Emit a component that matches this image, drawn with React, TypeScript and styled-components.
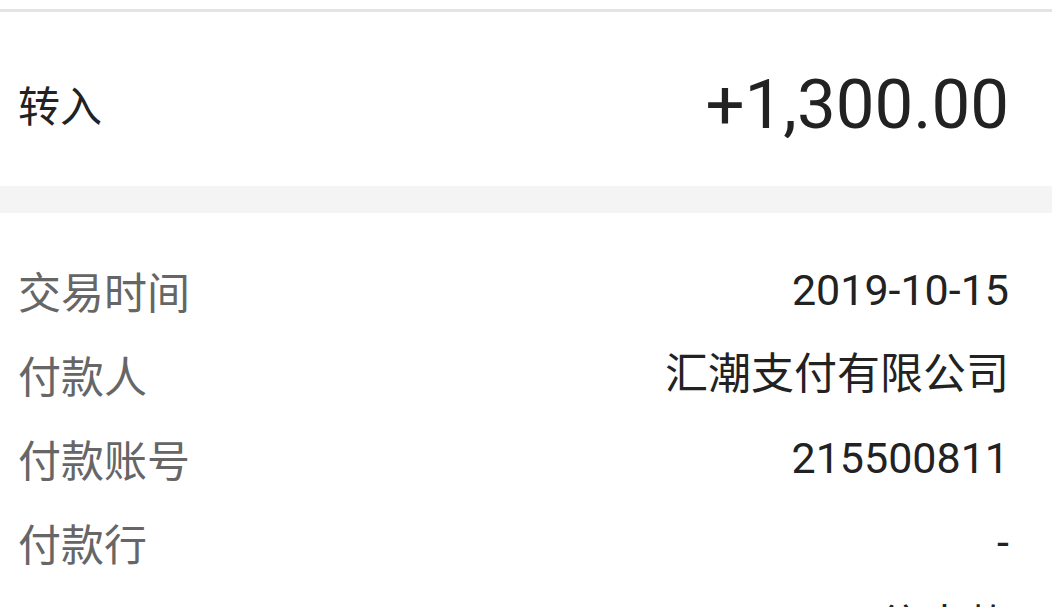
import styled, { createGlobalStyle } from "styled-components";

const GlobalStyle = createGlobalStyle`
  html, body {
    margin: 0;
    padding: 0;
    background: #fff;
    overflow: hidden;
  }
  body {
    font-family: "Roboto", "Noto Sans CJK SC", sans-serif;
  }
`;

const Page = styled.div`
  width: 1052px;
  height: 607px;
  overflow: hidden;
  padding-top: 9px;
  box-sizing: border-box;
`;

const TopLine = styled.div`
  height: 3px;
  background: #e4e4e4;
`;

const Summary = styled.div`
  height: 174px;
  box-sizing: border-box;
  padding: 10px 43px 0 18px;
  display: flex;
  align-items: center;
  justify-content: space-between;
`;

const Kind = styled.div`
  font-family: "Noto Sans CJK SC", sans-serif;
  font-size: 42px;
  color: #222;
  line-height: 1;
`;

const Amount = styled.div`
  font-family: "Roboto", sans-serif;
  font-size: 69px;
  color: #222;
  line-height: 1;
`;

const Gap = styled.div`
  height: 27px;
  background: #f4f4f4;
`;

const Details = styled.div`
  padding: 35px 43px 0 18px;
  display: flex;
  flex-direction: column;
`;

const Row = styled.div`
  height: 84px;
  display: flex;
  align-items: center;
  justify-content: space-between;
  font-size: 43px;
  line-height: 1;
`;

const Label = styled.span`
  font-family: "Noto Sans CJK SC", sans-serif;
  color: #666;
`;

const Value = styled.span`
  font-family: "Roboto", "Noto Sans CJK SC", sans-serif;
  color: #222;
`;

const rows: [string, string][] = [
  ["交易时间", "2019-10-15"],
  ["付款人", "汇潮支付有限公司"],
  ["付款账号", "215500811"],
  ["付款行", "-"],
  ["备注", "往来款"],
];

export default function App() {
  return (
    <Page>
      <GlobalStyle />
      <TopLine />
      <Summary>
        <Kind>转入</Kind>
        <Amount>+1,300.00</Amount>
      </Summary>
      <Gap />
      <Details>
        {rows.map(([k, v]) => (
          <Row key={k}>
            <Label>{k}</Label>
            <Value>{v}</Value>
          </Row>
        ))}
      </Details>
    </Page>
  );
}
